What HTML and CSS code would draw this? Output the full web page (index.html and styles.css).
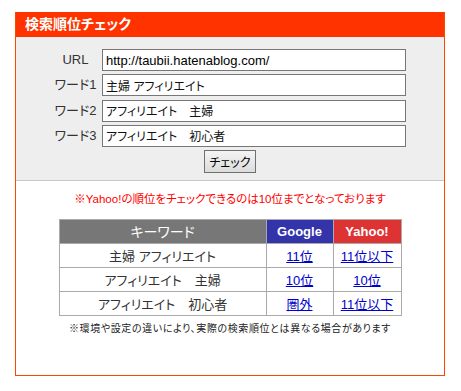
FILE: index.html
```html
<!DOCTYPE html>
<html lang="ja">

<head>
    <meta charset="UTF-8">
    <meta name="viewport" content="width=device-width, initial-scale=1.0">
    <title>検索順位チェック</title>
    <link rel="stylesheet" href="styles.css">
</head>

<body>
    <div class="checker">
        <!-- タイトル -->
        <div class="checker-title">検索順位チェック</div>

        <!-- 入力フォーム -->
        <form class="checker-form" onsubmit="return false;">
            <div class="fields">
                <label class="field-label">URL</label>
                <input class="field-input" type="text" value="http://taubii.hatenablog.com/">
                <label class="field-label">ワード1</label>
                <input class="field-input keyword" type="text" value="主婦 アフィリエイト">
                <label class="field-label">ワード2</label>
                <input class="field-input keyword" type="text" value="アフィリエイト　主婦">
                <label class="field-label">ワード3</label>
                <input class="field-input keyword" type="text" value="アフィリエイト　初心者">
            </div>
            <div class="actions">
                <button class="check-button" type="submit">チェック</button>
            </div>
        </form>

        <!-- 結果 -->
        <div class="result">
            <p class="notice">※Yahoo!の順位をチェックできるのは10位までとなっております</p>
            <table class="rank-table">
                <tr>
                    <th class="col-keyword">キーワード</th>
                    <th class="col-google">Google</th>
                    <th class="col-yahoo">Yahoo!</th>
                </tr>
                <tr>
                    <td>主婦 アフィリエイト</td>
                    <td><a href="#">11位</a></td>
                    <td><a href="#">11位以下</a></td>
                </tr>
                <tr>
                    <td>アフィリエイト　主婦</td>
                    <td><a href="#">10位</a></td>
                    <td><a href="#">10位</a></td>
                </tr>
                <tr>
                    <td>アフィリエイト　初心者</td>
                    <td><a href="#">圏外</a></td>
                    <td><a href="#">11位以下</a></td>
                </tr>
            </table>
            <p class="caution">※環境や設定の違いにより、実際の検索順位とは異なる場合があります</p>
        </div>
    </div>
</body>

</html>
```

FILE: styles.css
```css
/* 全体 */
body {
    margin: 0;
    padding: 12px 0 0 15px;
    background-color: #fff;
    color: #333;
    font-family: "Liberation Sans", "Noto Sans CJK JP", sans-serif;
    font-feature-settings: "palt";
}

.checker {
    width: 428px;
    height: 363px;
    border: 1px solid #ff4400;
    border-top: none;
}

/* タイトル */
.checker-title {
    height: 25px;
    padding-left: 9px;
    background-color: #ff3300;
    color: #fff;
    font-size: 14px;
    font-weight: bold;
    line-height: 25px;
}

/* フォーム */
.checker-form {
    margin: 0;
    padding: 12px 0 7px;
    background-color: #eeeeee;
    border-bottom: 1px solid #c8c8c8;
}

.fields {
    display: grid;
    grid-template-columns: 53px 304px;
    row-gap: 3.3px;
    padding-left: 33px;
}

.field-label {
    font-size: 13px;
    line-height: 22px;
    text-align: center;
    color: #333;
}

.field-input {
    box-sizing: border-box;
    width: 304px;
    height: 22px;
    margin: 0;
    padding: 0 3px;
    border: 1px solid #777;
    background-color: #fff;
    color: #000;
    font-family: "Liberation Sans", "Noto Sans CJK JP", sans-serif;
    font-feature-settings: "palt";
    font-size: 13px;
}

.field-input.keyword {
    font-size: 12px;
    color: #111;
}

.actions {
    display: flex;
    justify-content: center;
    margin-top: 3px;
}

.check-button {
    box-sizing: border-box;
    width: 52px;
    height: 23px;
    padding: 0;
    border: 1px solid #707070;
    background: linear-gradient(#f4f4f4, #dcdcdc);
    color: #000;
    font-family: "Noto Sans CJK JP", sans-serif;
    font-feature-settings: "palt";
    font-size: 12px;
    white-space: nowrap;
    cursor: pointer;
}

/* 結果 */
.result {
    padding-top: 11px;
}

.notice {
    margin: 0 0 13px;
    color: #ff0000;
    font-size: 11.5px;
    line-height: 14px;
    text-align: center;
}

.rank-table {
    margin: 0 auto;
    border-collapse: collapse;
    font-size: 13px;
}

.rank-table th,
.rank-table td {
    border: 1px solid #aaa;
    padding: 0;
    text-align: center;
    height: 23px;
}

.rank-table th {
    color: #fff;
    font-weight: normal;
    height: 23px;
}

.col-keyword {
    width: 206px;
    background-color: #777777;
    font-size: 14px;
}

.col-google {
    width: 66px;
    background-color: #3333aa;
    font-weight: bold !important;
}

.col-yahoo {
    width: 67px;
    background-color: #dd3333;
    font-weight: bold !important;
}

.rank-table a {
    color: #0000cc;
}

.caution {
    margin: 6px 0 0;
    font-size: 10px;
    letter-spacing: 0.6px;
    line-height: 14px;
    text-align: center;
    color: #222;
}
```
